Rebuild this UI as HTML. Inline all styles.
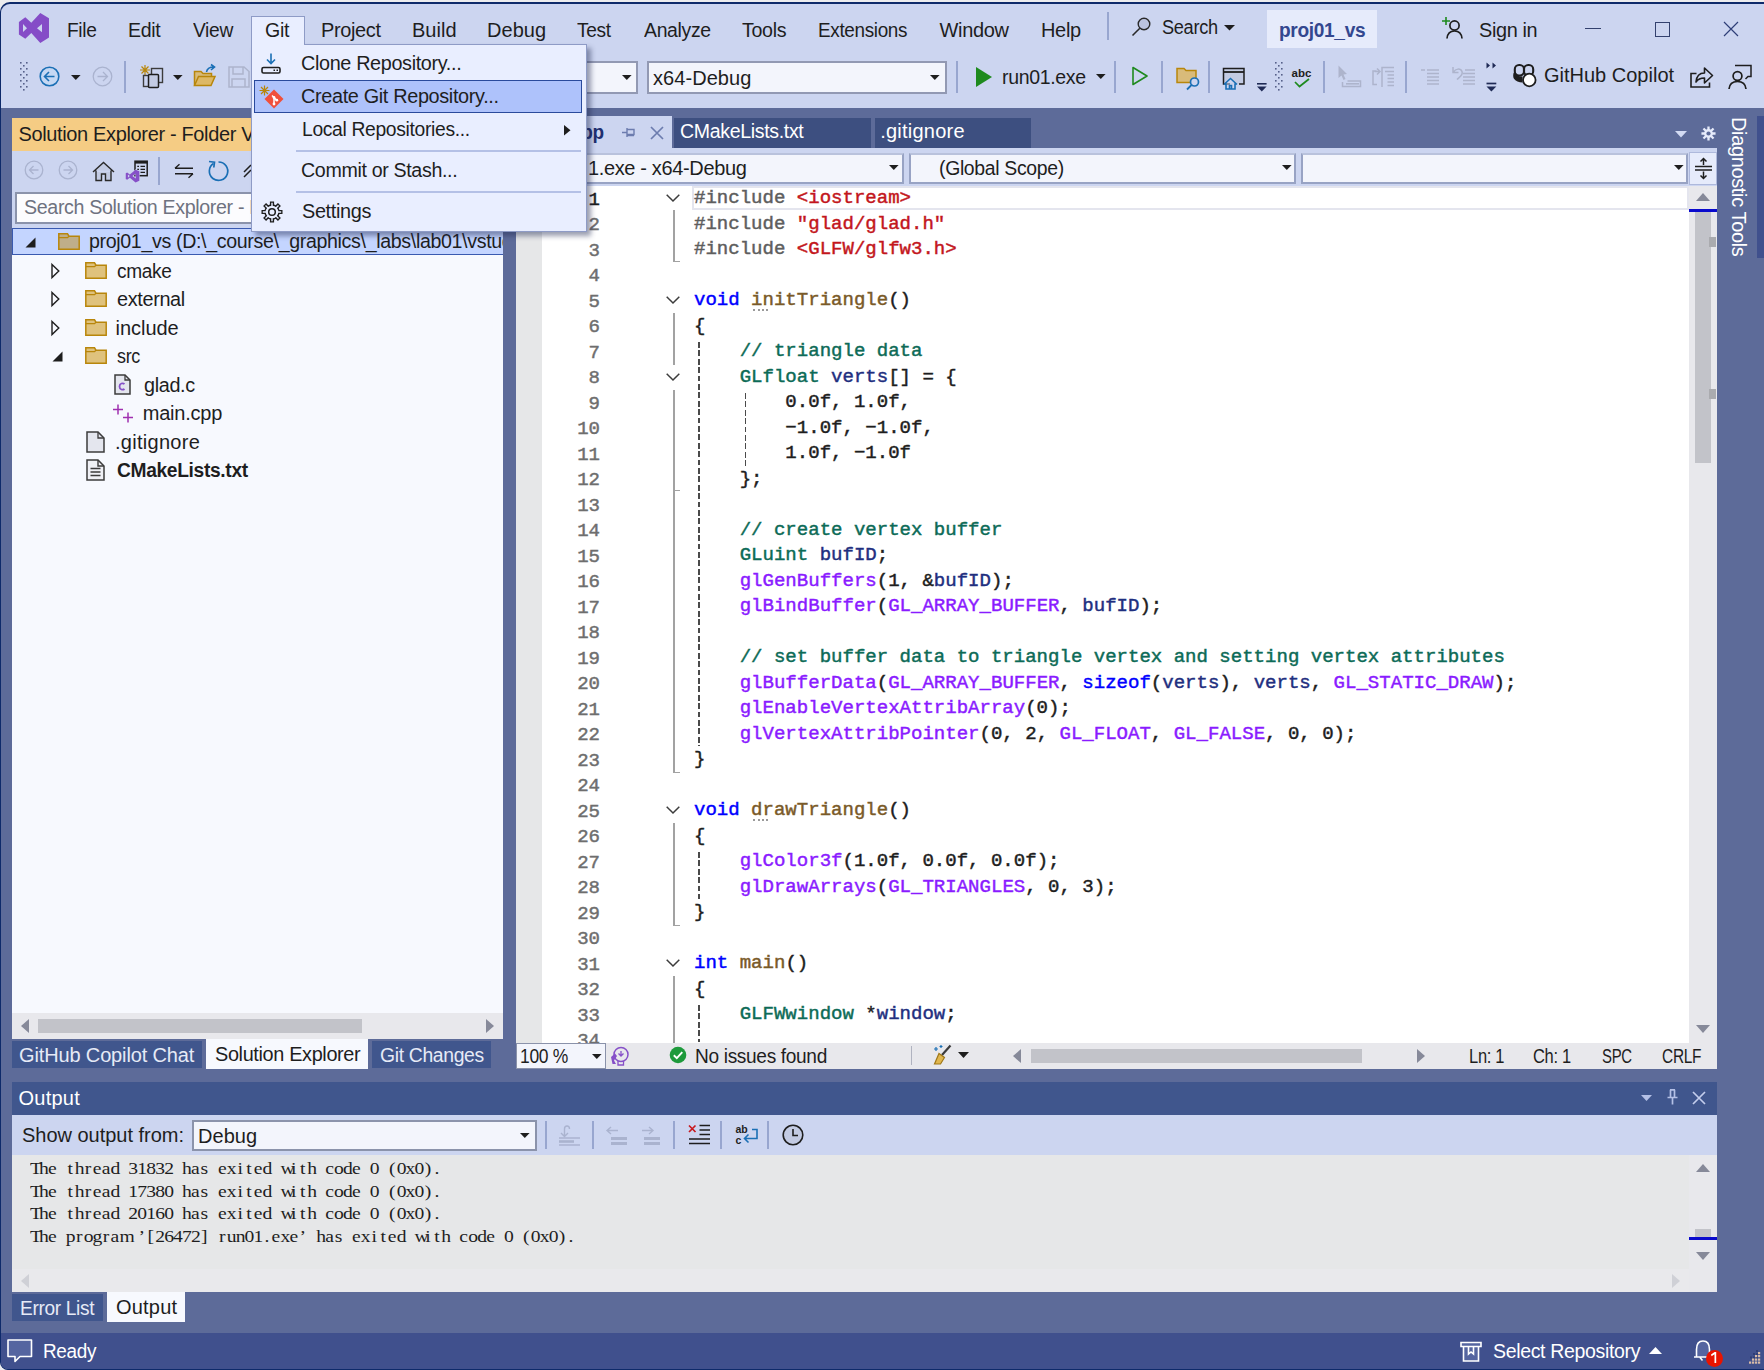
<!DOCTYPE html>
<html>
<head>
<meta charset="utf-8">
<title>proj01_vs - Microsoft Visual Studio</title>
<style>
*{box-sizing:border-box;margin:0;padding:0}
html,body{width:1764px;height:1370px;overflow:hidden;background:#ececee}
body{font-family:"Liberation Sans",sans-serif;font-size:20px;color:#1e1e1e;position:relative}
.a{position:absolute}
.t{position:absolute;white-space:nowrap;line-height:24px;height:24px;letter-spacing:-0.45px}
.w{color:#fff}
#win{position:absolute;left:0;top:2px;width:1775px;height:1368px;background:#5d6b99;border:1px solid #0e2a6a;border-top-width:2px;border-radius:10px 10px 8px 8px;overflow:hidden}
#root{position:absolute;left:0;top:0;width:1764px;height:1370px}
.sep{position:absolute;width:2px;background:#98a6cf}
svg{position:absolute;overflow:visible}
.code{position:absolute;white-space:pre;font-family:"Liberation Mono",monospace;font-size:19.05px;line-height:25.5px;letter-spacing:0;-webkit-text-stroke:0.45px}
.ln{color:#6a6a6a}
.k{color:#0000ff}.s{color:#c3161c}.c{color:#0d6b57}.ty{color:#0d6b57}.f{color:#7a5a28}.m{color:#8a1bff}.v{color:#1f2f7f}.p{color:#5e5e5e}
.os{white-space:nowrap;font-family:"Liberation Serif",serif;font-size:17.500px;line-height:22px;height:22px;color:#1e1e1e;transform-origin:0 0;transform:scaleX(1.120)}
.os i{display:inline-block;width:7.991px;text-align:center;font-style:normal}
</style>
</head>
<body>
<div id="win"></div>
<div id="root">
<!-- TITLE + TOOLBAR BACKGROUND -->
<div class="a" style="left:1px;top:4px;width:1773px;height:103.500px;background:#ccd5f0;border-radius:9px 9px 0 0"></div>
<!--MENUBAR-->
<svg style="left:17px;top:11px" width="34" height="34" viewBox="0 0 34 34"><path d="M1.900 11L8.300 6.300L14.300 11.800L23.300 1.900L32 7.300V26.500L23.300 32L14.300 22L8.300 27.700L1.900 23.400ZM6 13V21L10 17.300ZM25 13L20 17.300L25 21.300Z" fill="#854cc7" fill-rule="evenodd"/></svg>
<div class="t" style="left:66.7px;top:18px;transform-origin:0 0;transform:scaleX(0.958);letter-spacing:-0.35px">File</div>
<div class="t" style="left:127.9px;top:18px;transform-origin:0 0;transform:scaleX(0.977);letter-spacing:-0.35px">Edit</div>
<div class="t" style="left:193.1px;top:18px;transform-origin:0 0;transform:scaleX(0.960);letter-spacing:-0.35px">View</div>
<div class="a" style="left:251px;top:16px;width:54px;height:32px;background:#e9eeff;border:1px solid #8e9bc6;border-bottom:0"></div>
<div class="t" style="left:264.7px;top:18px;transform-origin:0 0;transform:scaleX(0.979);letter-spacing:-0.35px">Git</div>
<div class="t" style="left:320.6px;top:18px;transform-origin:0 0;transform:scaleX(0.998);letter-spacing:-0.35px">Project</div>
<div class="t" style="left:411.9px;top:18px;letter-spacing:0.04px">Build</div>
<div class="t" style="left:487.1px;top:18px;letter-spacing:0.02px">Debug</div>
<div class="t" style="left:577.4px;top:18px;transform-origin:0 0;transform:scaleX(0.956);letter-spacing:-0.35px">Test</div>
<div class="t" style="left:643.5px;top:18px;transform-origin:0 0;transform:scaleX(0.972);letter-spacing:-0.35px">Analyze</div>
<div class="t" style="left:742.0px;top:18px;transform-origin:0 0;transform:scaleX(0.983);letter-spacing:-0.35px">Tools</div>
<div class="t" style="left:817.6px;top:18px;transform-origin:0 0;transform:scaleX(0.945);letter-spacing:-0.35px">Extensions</div>
<div class="t" style="left:939.5px;top:18px;letter-spacing:-0.34px">Window</div>
<div class="t" style="left:1041.0px;top:18px;letter-spacing:-0.34px">Help</div>
<div class="sep" style="left:1107px;top:12px;height:28px"></div>
<svg style="left:1131px;top:16px" width="22" height="22" viewBox="0 0 22 22"><circle cx="13" cy="8" r="5.800" fill="#bcc4e0" stroke="#2a2a2a" stroke-width="1.400"/><path d="M8.800 12.200L1.500 19.500" stroke="#2a2a2a" stroke-width="1.600"/></svg>
<div class="t" style="left:1162.0px;top:15px;transform-origin:0 0;transform:scaleX(0.909);letter-spacing:-0.35px">Search</div>
<svg style="left:1224px;top:25px" width="12" height="6" viewBox="0 0 12 6"><path d="M0 0H11L5.5 5.5Z" fill="#1e1e1e"/></svg>
<div class="a" style="left:1267px;top:10px;width:110px;height:38px;background:#e6ebfb"></div>
<div class="t" style="left:1278.5px;top:18px;font-weight:bold;color:#33478f;transform-origin:0 0;transform:scaleX(0.956);letter-spacing:-0.35px">proj01_vs</div>
<svg style="left:1441px;top:16px" width="26" height="26" viewBox="0 0 26 26"><path d="M5 1V9M1 5H9" stroke="#1e8a1e" stroke-width="1.6" fill="none"/><circle cx="13.5" cy="9.5" r="4.6" fill="none" stroke="#1e1e1e" stroke-width="1.7"/><path d="M6 22.5C6.5 17 9.5 15 13.5 15S20.5 17 21 22.5" fill="none" stroke="#1e1e1e" stroke-width="1.7"/></svg>
<div class="t" style="left:1478.5px;top:18px;transform-origin:0 0;transform:scaleX(0.993);letter-spacing:-0.35px">Sign in</div>
<div class="a" style="left:1585px;top:28px;width:16px;height:1.200px;background:#33416e"></div>
<div class="a" style="left:1655px;top:22px;width:15px;height:15px;border:1.200px solid #33416e"></div>
<svg style="left:1723px;top:21px" width="16" height="16" viewBox="0 0 16 16"><path d="M1 1L15 15M15 1L1 15" stroke="#2f3f78" stroke-width="1.200"/></svg>
<!--TOOLBAR-->
<svg style="left:20px;top:62px" width="9" height="30" viewBox="0 0 9 30"><g fill="#56618a"><rect x="0" y="0.0" width="1.6" height="1.6"/><rect x="6" y="0.0" width="1.6" height="1.6"/><rect x="3" y="3.0" width="1.6" height="1.6"/><rect x="0" y="6.0" width="1.6" height="1.6"/><rect x="6" y="6.0" width="1.6" height="1.6"/><rect x="3" y="9.0" width="1.6" height="1.6"/><rect x="0" y="12.0" width="1.6" height="1.6"/><rect x="6" y="12.0" width="1.6" height="1.6"/><rect x="3" y="15.0" width="1.6" height="1.6"/><rect x="0" y="18.0" width="1.6" height="1.6"/><rect x="6" y="18.0" width="1.6" height="1.6"/><rect x="3" y="21.0" width="1.6" height="1.6"/><rect x="0" y="24.0" width="1.6" height="1.6"/><rect x="6" y="24.0" width="1.6" height="1.6"/><rect x="3" y="27.0" width="1.6" height="1.6"/></g></svg>
<svg style="left:39px;top:66px" width="21" height="21" viewBox="0 0 21 21"><circle cx="10.5" cy="10.5" r="9.3" fill="#c5d8f3" stroke="#1a6fb5" stroke-width="1.6"/><path d="M15.5 10.5H6M10 6L5.5 10.5L10 15" fill="none" stroke="#1a6fb5" stroke-width="1.6"/></svg>
<svg style="left:71px;top:75px" width="10" height="6" viewBox="0 0 10 6"><path d="M0 0H9.6L4.8 5Z" fill="#1e1e1e"/></svg>
<svg style="left:92px;top:66px" width="21" height="21" viewBox="0 0 21 21"><circle cx="10.5" cy="10.5" r="9.3" fill="none" stroke="#aab3cf" stroke-width="1.3"/><path d="M5.5 10.5H15M11 6L15.5 10.5L11 15" fill="none" stroke="#aab3cf" stroke-width="1.3"/></svg>
<div class="sep" style="left:124px;top:61px;height:32px"></div>
<svg style="left:139px;top:64px" width="27" height="26" viewBox="0 0 27 26"><g stroke="#b8860b" stroke-width="1.2"><path d="M6 1V11M1 6H11M2.5 2.5L9.5 9.5M9.5 2.5L2.5 9.5"/></g><rect x="12.5" y="4.5" width="11" height="14" fill="#ccd5f0" stroke="#3c3c3c" stroke-width="1.4"/><rect x="4.5" y="11.5" width="9" height="11" fill="#ccd5f0" stroke="#3c3c3c" stroke-width="1.4"/><rect x="9.5" y="10.5" width="10" height="13" rx="1" fill="#c3cbe3" stroke="#1e1e1e" stroke-width="1.5"/></svg>
<svg style="left:173px;top:75px" width="10" height="6" viewBox="0 0 10 6"><path d="M0 0H9.6L4.8 5Z" fill="#1e1e1e"/></svg>
<svg style="left:193px;top:64px" width="24" height="24" viewBox="0 0 24 24"><path d="M1.5 21.5V7.5H8L10 9.5H18.5V12" fill="#d9bb7a" stroke="#b8860b" stroke-width="1.5"/><path d="M1.5 21.5L5.5 12.5H22L18 21.5Z" fill="#ddb866" stroke="#b8860b" stroke-width="1.5"/><path d="M13.5 8C14 4.5 16.5 3 21 3M18 0.5L21.5 3L18 6" fill="none" stroke="#1a6fb5" stroke-width="1.6"/></svg>
<svg style="left:228px;top:66px" width="22" height="22" viewBox="0 0 22 22"><path d="M1 1H16L21 5.5V21H1Z M5 1V8H15V1 M4 21V13H17V21" fill="none" stroke="#adb4cc" stroke-width="1.500"/></svg>
<div class="a" style="left:560px;top:61px;width:78px;height:33px;background:#f3f5fc;border:2px solid #9299b3"></div>
<svg style="left:622px;top:75px" width="10" height="6" viewBox="0 0 10 6"><path d="M0 0H9.6L4.8 5Z" fill="#1e1e1e"/></svg>
<div class="a" style="left:647px;top:61px;width:300px;height:33px;background:#f3f5fc;border:2px solid #9299b3"></div>
<div class="t" style="left:653.0px;top:66px;letter-spacing:0.06px">x64-Debug</div>
<svg style="left:930px;top:75px" width="10" height="6" viewBox="0 0 10 6"><path d="M0 0H9.6L4.8 5Z" fill="#1e1e1e"/></svg>
<div class="sep" style="left:956px;top:61px;height:32px"></div>
<svg style="left:976px;top:67px" width="17" height="21" viewBox="0 0 17 21"><path d="M0 0L16 10L0 20Z" fill="#1e8a1e"/></svg>
<div class="t" style="left:1001.5px;top:65px;transform-origin:0 0;transform:scaleX(0.976);letter-spacing:-0.35px">run01.exe</div>
<svg style="left:1096px;top:74px" width="10" height="6" viewBox="0 0 10 6"><path d="M0 0H9.6L4.8 5Z" fill="#1e1e1e"/></svg>
<div class="sep" style="left:1114px;top:61px;height:32px"></div>
<svg style="left:1132px;top:66px" width="17" height="21" viewBox="0 0 17 21"><path d="M1 1.5L15 10L1 18.5Z" fill="none" stroke="#1e8a1e" stroke-width="1.6" stroke-linejoin="round"/></svg>
<div class="sep" style="left:1161px;top:61px;height:32px"></div>
<svg style="left:1176px;top:66px" width="25" height="24" viewBox="0 0 25 24"><path d="M1 16.5V2.5H8L10 4.5H20V16.5Z" fill="#d9bb7a" stroke="#b8860b" stroke-width="1.5"/><circle cx="18.5" cy="16" r="4" fill="#ccd5f0" stroke="#1a6fb5" stroke-width="1.7"/><path d="M15.5 19L11 23.5" stroke="#1a6fb5" stroke-width="1.8"/></svg>
<div class="sep" style="left:1208px;top:61px;height:32px"></div>
<svg style="left:1222px;top:67px" width="25" height="24" viewBox="0 0 25 24"><path d="M8 17H1.500V1.500H22V17H17" fill="#c3cbe3" stroke="#1e1e1e" stroke-width="1.5"/><path d="M1.5 5H22" stroke="#1e1e1e" stroke-width="1.8"/><path d="M2 17.500L8.500 11.500L15 17.500M4 16.500V22H13V16.500M7.500 22V18.500H9.500V22" fill="#ccd5f0" stroke="#1a6fb5" stroke-width="1.6"/></svg>
<svg style="left:1257px;top:83px" width="10" height="9" viewBox="0 0 10 9"><path d="M0 0.800H9.600" stroke="#1f2a55" stroke-width="1.600"/><path d="M0 3.500H9.600L4.800 8.500Z" fill="#1f2a55"/></svg>
<svg style="left:1275px;top:62px" width="9" height="30" viewBox="0 0 9 30"><g fill="#56618a"><rect x="0" y="0.0" width="1.6" height="1.6"/><rect x="6" y="0.0" width="1.6" height="1.6"/><rect x="3" y="3.0" width="1.6" height="1.6"/><rect x="0" y="6.0" width="1.6" height="1.6"/><rect x="6" y="6.0" width="1.6" height="1.6"/><rect x="3" y="9.0" width="1.6" height="1.6"/><rect x="0" y="12.0" width="1.6" height="1.6"/><rect x="6" y="12.0" width="1.6" height="1.6"/><rect x="3" y="15.0" width="1.6" height="1.6"/><rect x="0" y="18.0" width="1.6" height="1.6"/><rect x="6" y="18.0" width="1.6" height="1.6"/><rect x="3" y="21.0" width="1.6" height="1.6"/><rect x="0" y="24.0" width="1.6" height="1.6"/><rect x="6" y="24.0" width="1.6" height="1.6"/><rect x="3" y="27.0" width="1.6" height="1.6"/></g></svg>
<div class="t" style="left:1291.500px;top:66px;font-size:11.500px;font-weight:bold;letter-spacing:0;line-height:14px;height:14px">abc</div>
<svg style="left:1294px;top:78px" width="16" height="10" viewBox="0 0 16 10"><path d="M1 4L5.500 8.500L15 1" fill="none" stroke="#1e8a1e" stroke-width="1.700"/></svg>
<div class="sep" style="left:1323px;top:61px;height:32px"></div>
<svg style="left:1338px;top:65px" width="24" height="24" viewBox="0 0 24 24"><path d="M0.500 0.500L9 9L5.500 9.500L7.500 14L5.500 15L3.500 10.500L0.500 13Z" fill="#adb4cc"/><path d="M4.500 17V21.500H22.500V16H9.500" fill="none" stroke="#adb4cc" stroke-width="1.500"/><path d="M8 18.800H21" stroke="#adb4cc" stroke-width="1.600"/></svg>
<svg style="left:1371px;top:65px" width="24" height="24" viewBox="0 0 24 24"><path d="M5.500 6H2V19.500H6M3.500 6.500H8.500M6 3.500L9 6.500L6 9.500" fill="none" stroke="#adb4cc" stroke-width="1.500"/><path d="M11 22V2.500H23" fill="none" stroke="#adb4cc" stroke-width="1.500"/><path d="M14 6.500H23M16.500 10H23M16.500 13.500H23M16.500 17H23M16.500 20.500H23" stroke="#adb4cc" stroke-width="1.700"/></svg>
<div class="sep" style="left:1405px;top:61px;height:32px"></div>
<svg style="left:1420px;top:68px" width="20" height="20" viewBox="0 0 20 20"><path d="M1 2H5M7 2H19M7 5.500H19M7 9H19M7 12.500H19M7 16H19" stroke="#adb4cc" stroke-width="1.600"/></svg>
<svg style="left:1452px;top:66px" width="24" height="22" viewBox="0 0 24 22"><path d="M1 1V6.500H6.500M1.500 6C3.500 2.500 8.500 2 10 5.500S7.500 11 5 13.500" fill="none" stroke="#adb4cc" stroke-width="1.500"/><path d="M13 4H23M11 7.500H23M11 11H23M11 14.500H23M11 18H23" stroke="#adb4cc" stroke-width="1.600"/></svg>
<svg style="left:1486px;top:62px" width="11" height="31" viewBox="0 0 11 31"><path d="M0.500 0.500V6.500L4 3.500ZM6.500 0.500V6.500L10 3.500Z" fill="#1f2a55"/><path d="M0.500 21.500H10.300" stroke="#1f2a55" stroke-width="1.700"/><path d="M0.500 24.500H10.300L5.400 29.500Z" fill="#1f2a55"/></svg>
<svg style="left:1512px;top:63px" width="26" height="26" viewBox="0 0 26 26"><rect x="2.800" y="2" width="9.200" height="10.500" rx="4.200" fill="none" stroke="#1e1e1e" stroke-width="2.100"/><rect x="12" y="2" width="9.200" height="10.500" rx="4.200" fill="none" stroke="#1e1e1e" stroke-width="2.100"/><path d="M1.800 9.500C1 11 1 14 1.800 15.500C3.500 18 7 19.500 10.500 19.500V13.500C6 13.500 3.500 12 2.800 9.500Z" fill="#1e1e1e"/><circle cx="17.300" cy="17" r="6.300" fill="#fff" stroke="#1e1e1e" stroke-width="1.800"/></svg>
<div class="t" style="left:1544.0px;top:63px;letter-spacing:-0.00px">GitHub Copilot</div>
<svg style="left:1690px;top:66px" width="24" height="22" viewBox="0 0 24 22"><path d="M6.500 7.500H1V21H19.500V16.500" fill="none" stroke="#1e1e1e" stroke-width="1.600"/><path d="M6 16C6.500 10 10 7 14.500 7V2L22.500 9.500L14.500 17V12C11 12 8 13 6 16Z" fill="none" stroke="#1e1e1e" stroke-width="1.600" stroke-linejoin="round"/></svg>
<svg style="left:1727px;top:64px" width="26" height="26" viewBox="0 0 26 26"><path d="M8 1.500H24V12.500H21L18.500 15" fill="none" stroke="#1e1e1e" stroke-width="1.500"/><circle cx="10.500" cy="12" r="4.400" fill="#ccd5f0" stroke="#1e1e1e" stroke-width="1.700"/><path d="M2 25C2.500 19.500 6 17.500 10.500 17.500S18.500 19.500 19 25" fill="none" stroke="#1e1e1e" stroke-width="1.700"/></svg>
<!--SOLEXP-->
<div class="a" style="left:12px;top:118px;width:491px;height:33px;background:#f5cc84"></div>
<div class="t" style="left:18.4px;top:122px;transform-origin:0 0;transform:scaleX(1.000);letter-spacing:-0.35px">Solution Explorer - Folder View</div>
<div class="a" style="left:12px;top:151px;width:491px;height:77px;background:#ccd5f0"></div>
<svg style="left:24px;top:160px" width="20" height="20" viewBox="0 0 20 20"><circle cx="10" cy="10" r="8.800" fill="none" stroke="#aab3cf" stroke-width="1.300"/><path d="M14.500 10H5.500M9.500 6L5.500 10L9.500 14" fill="none" stroke="#aab3cf" stroke-width="1.300"/></svg>
<svg style="left:58px;top:160px" width="20" height="20" viewBox="0 0 20 20"><circle cx="10" cy="10" r="8.800" fill="none" stroke="#aab3cf" stroke-width="1.300"/><path d="M5.500 10H14.500M10.500 6L14.500 10L10.500 14" fill="none" stroke="#aab3cf" stroke-width="1.300"/></svg>
<svg style="left:92px;top:161px" width="23" height="21" viewBox="0 0 23 21"><path d="M1 11L11.500 1.500L22 11M4 9.500V19.500H9.500V13H13.500V19.500H19V9.500" fill="#c3cbe3" stroke="#2a2a2a" stroke-width="1.400"/></svg>
<svg style="left:125px;top:160px" width="24" height="23" viewBox="0 0 24 23"><rect x="10" y="1.200" width="12.200" height="14.500" fill="#ccd5f0" stroke="#1e1e1e" stroke-width="1.500"/><path d="M10 2.300H22.200" stroke="#1e1e1e" stroke-width="2.600"/><path d="M12.300 6.300H14M15.500 6.300H20M12.300 9.300H14M15.500 9.300H20M12.300 12.300H14M15.500 12.300H20" stroke="#1e1e1e" stroke-width="1.300"/><g transform="translate(0,9.300) scale(0.470,0.450)"><path d="M22.500 0.800 L30.500 4.600 V25.600 L22.500 29.600 L10.200 18.700 L4.600 23.200 L1.600 21.700 V8.500 L4.600 7 L10.200 11.600 Z M6.200 11.600 V18.700 L10.200 15.100 Z M23 9.600 L15.600 15.100 L23 20.700 Z" fill="#8650c8" stroke="#ccd5f0" stroke-width="1.500" paint-order="stroke" fill-rule="evenodd"/></g></svg>
<div class="sep" style="left:158px;top:157px;height:28px"></div>
<svg style="left:174px;top:164px" width="20" height="14" viewBox="0 0 20 14"><path d="M1 4.200H19M5.500 0.300L1 4.200M1 9.800H19M14.500 13.700L19 9.800" fill="none" stroke="#1e1e1e" stroke-width="1.400"/></svg>
<svg style="left:207px;top:159px" width="23" height="23" viewBox="0 0 23 23"><path d="M6.500 4.500A9.200 9.200 0 1 0 11.500 3" fill="none" stroke="#1a6fb5" stroke-width="1.700"/><path d="M2 2.500L7.500 3.200L6.800 8.500" fill="none" stroke="#1a6fb5" stroke-width="1.700"/></svg>
<svg style="left:243px;top:163px" width="12" height="16" viewBox="0 0 12 16"><path d="M1 9L8 2M1 14L8 7" stroke="#1e1e1e" stroke-width="1.500"/></svg>
<div class="a" style="left:15px;top:192px;width:486px;height:32px;background:#fcfcfe;border:2px solid #8b93ab"></div>
<div class="t" style="left:23.6px;top:195px;color:#6e7280;transform-origin:0 0;transform:scaleX(0.981);letter-spacing:-0.35px">Search Solution Explorer - Folder View</div>
<div class="a" style="left:12px;top:228px;width:491px;height:785px;background:#f7f9fe"></div>
<div class="a" style="left:12px;top:228px;width:491px;height:27px;background:#c4d5ff;border:1px solid #3a5ab0;border-right:0"></div>
<svg style="left:25px;top:237px" width="11" height="11" viewBox="0 0 11 11"><path d="M10.500 0.500V10.500H0.500Z" fill="#1e1e1e"/></svg><svg style="left:58px;top:233px" width="22" height="17" viewBox="0 0 22 17"><path d="M0.8 16.200V0.800H9.500L11 3.200H21.200V16.200Z" fill="#bfae8a" stroke="#b8860b" stroke-width="1.500"/><path d="M0.8 4.700H9.500L11 3.200" fill="none" stroke="#b8860b" stroke-width="1.300"/></svg>
<div class="a" style="left:12px;top:229px;width:491px;height:25px;overflow:hidden"><div class="t" style="left:77.0px;top:0px;transform-origin:0 0;transform:scaleX(0.980);letter-spacing:-0.35px">proj01_vs (D:\_course\_graphics\_labs\lab01\vstudio)</div></div>
<svg style="left:51px;top:263px" width="9" height="16" viewBox="0 0 9 16"><path d="M1 1.500L7.800 8L1 14.500Z" fill="none" stroke="#1e1e1e" stroke-width="1.400"/></svg><svg style="left:85px;top:262px" width="22" height="17" viewBox="0 0 22 17"><path d="M0.8 16.200V0.800H9.500L11 3.200H21.200V16.200Z" fill="#dfc27d" stroke="#b8860b" stroke-width="1.500"/><path d="M0.8 4.700H9.500L11 3.200" fill="none" stroke="#b8860b" stroke-width="1.300"/></svg>
<div class="t" style="left:116.5px;top:259px;transform-origin:0 0;transform:scaleX(0.955);letter-spacing:-0.35px">cmake</div>
<svg style="left:51px;top:291px" width="9" height="16" viewBox="0 0 9 16"><path d="M1 1.500L7.800 8L1 14.500Z" fill="none" stroke="#1e1e1e" stroke-width="1.400"/></svg><svg style="left:85px;top:290px" width="22" height="17" viewBox="0 0 22 17"><path d="M0.8 16.200V0.800H9.500L11 3.200H21.200V16.200Z" fill="#dfc27d" stroke="#b8860b" stroke-width="1.500"/><path d="M0.8 4.700H9.500L11 3.200" fill="none" stroke="#b8860b" stroke-width="1.300"/></svg>
<div class="t" style="left:116.5px;top:287px;transform-origin:0 0;transform:scaleX(0.993);letter-spacing:-0.35px">external</div>
<svg style="left:51px;top:320px" width="9" height="16" viewBox="0 0 9 16"><path d="M1 1.500L7.800 8L1 14.500Z" fill="none" stroke="#1e1e1e" stroke-width="1.400"/></svg><svg style="left:85px;top:319px" width="22" height="17" viewBox="0 0 22 17"><path d="M0.8 16.200V0.800H9.500L11 3.200H21.200V16.200Z" fill="#dfc27d" stroke="#b8860b" stroke-width="1.500"/><path d="M0.8 4.700H9.500L11 3.200" fill="none" stroke="#b8860b" stroke-width="1.300"/></svg>
<div class="t" style="left:115.5px;top:316px;letter-spacing:-0.03px">include</div>
<svg style="left:52px;top:351px" width="11" height="11" viewBox="0 0 11 11"><path d="M10.500 0.500V10.500H0.500Z" fill="#1e1e1e"/></svg><svg style="left:85px;top:347px" width="22" height="17" viewBox="0 0 22 17"><path d="M0.8 16.200V0.800H9.500L11 3.200H21.200V16.200Z" fill="#dfc27d" stroke="#b8860b" stroke-width="1.500"/><path d="M0.8 4.700H9.500L11 3.200" fill="none" stroke="#b8860b" stroke-width="1.300"/></svg>
<div class="t" style="left:116.5px;top:344px;transform-origin:0 0;transform:scaleX(0.898);letter-spacing:-0.35px">src</div>
<svg style="left:114px;top:374px" width="17" height="21" viewBox="0 0 17 21"><path d="M1 1H11L16 6V20H1Z" fill="#e4e6ee" stroke="#3c3c3c" stroke-width="1.500"/><path d="M11 1V6H16" fill="none" stroke="#3c3c3c" stroke-width="1.300"/><path d="M10.500 10C9 8.800 5.500 9 5.500 12.500S9 16.200 10.500 15" fill="none" stroke="#8650c8" stroke-width="1.800"/></svg>
<div class="t" style="left:143.7px;top:373px;transform-origin:0 0;transform:scaleX(0.990);letter-spacing:-0.35px">glad.c</div>
<svg style="left:112px;top:404px" width="23" height="20" viewBox="0 0 23 20"><path d="M6 0.500V10.500M1 5.500H11M16 8.500V18.500M11 13.500H21" stroke="#a030b0" stroke-width="1.500"/></svg>
<div class="t" style="left:142.7px;top:401px;letter-spacing:-0.22px">main.cpp</div>
<svg style="left:86px;top:431px" width="19" height="22" viewBox="0 0 19 22"><path d="M1 1H12L18 7V21H1Z" fill="#e4e6ee" stroke="#3c3c3c" stroke-width="1.500"/><path d="M12 1V7H18" fill="none" stroke="#3c3c3c" stroke-width="1.300"/></svg>
<div class="t" style="left:115.0px;top:430px;letter-spacing:0.28px">.gitignore</div>
<svg style="left:86px;top:459px" width="19" height="22" viewBox="0 0 19 22"><path d="M1 1H12L18 7V21H1Z" fill="#f0f1f6" stroke="#3c3c3c" stroke-width="1.500"/><path d="M12 1V7H18M4.500 9.500H14.500M4.500 13H14.500M4.500 16.500H14.500" fill="none" stroke="#3c3c3c" stroke-width="1.400"/></svg>
<div class="t" style="left:116.5px;top:458px;font-weight:bold;transform-origin:0 0;transform:scaleX(0.960);letter-spacing:-0.35px">CMakeLists.txt</div>
<div class="a" style="left:12px;top:1013px;width:491px;height:26px;background:#e8e8ec"></div>
<div class="a" style="left:38px;top:1019px;width:324px;height:14px;background:#c2c3c9"></div>
<svg style="left:21px;top:1019px" width="8" height="14" viewBox="0 0 8 14"><path d="M8 0V14L0 7Z" fill="#868999"/></svg>
<svg style="left:486px;top:1019px" width="8" height="14" viewBox="0 0 8 14"><path d="M0 0V14L8 7Z" fill="#868999"/></svg>
<div class="a" style="left:12px;top:1041px;width:190px;height:27px;background:#40568d"></div>
<div class="t w" style="left:19.0px;top:1043px;color:#e6eaf6;letter-spacing:-0.14px">GitHub Copilot Chat</div>
<div class="a" style="left:206px;top:1039px;width:162px;height:30px;background:#f7f9fe"></div>
<div class="t" style="left:214.5px;top:1042px;transform-origin:0 0;transform:scaleX(0.993);letter-spacing:-0.35px">Solution Explorer</div>
<div class="a" style="left:372px;top:1041px;width:119px;height:27px;background:#40568d"></div>
<div class="t w" style="left:379.5px;top:1043px;color:#e6eaf6;transform-origin:0 0;transform:scaleX(0.968);letter-spacing:-0.35px">Git Changes</div>
<!--EDITOR-->
<div class="a" style="left:516px;top:116px;width:156px;height:33px;background:#ccd5f0"></div>
<div class="t" style="left:523.1px;top:120px;font-weight:bold;color:#1f2f6f;transform-origin:0 0;transform:scaleX(0.949);letter-spacing:-0.35px">main.cpp</div>
<svg style="left:622px;top:126px" width="13" height="13" viewBox="0 0 13 13"><path d="M0 6.500H5M5 2V11M5 3.500H12V8.500H5M5 9.500H12" fill="none" stroke="#6c7cae" stroke-width="1.400"/></svg>
<svg style="left:650px;top:126px" width="14" height="14" viewBox="0 0 14 14"><path d="M1 1L13 13M13 1L1 13" stroke="#6c7cae" stroke-width="1.700"/></svg>
<div class="a" style="left:674px;top:118px;width:197px;height:31px;background:#3d4f80"></div>
<div class="t w" style="left:679.5px;top:119px;transform-origin:0 0;transform:scaleX(0.978);letter-spacing:-0.35px">CMakeLists.txt</div>
<div class="a" style="left:875px;top:118px;width:156px;height:31px;background:#3d4f80"></div>
<div class="t w" style="left:880.2px;top:119px;letter-spacing:0.24px">.gitignore</div>
<svg style="left:1675px;top:131px" width="12" height="7" viewBox="0 0 12 7"><path d="M0 0H12L6 6.500Z" fill="#d3dbf3"/></svg>
<svg style="left:1701px;top:126px" width="15" height="15" viewBox="0 0 17 17"><g stroke="#e6ebfb" stroke-width="2.600"><path d="M8.500 0.500V16.500M0.500 8.500H16.500M2.800 2.800L14.200 14.200M14.200 2.800L2.800 14.200"/></g><circle cx="8.500" cy="8.500" r="5" fill="#e6ebfb"/><circle cx="8.500" cy="8.500" r="2.400" fill="#5d6b99"/></svg>
<div class="a" style="left:516px;top:148px;width:1201px;height:38px;background:#ccd5f0"></div>
<div class="a" style="left:516px;top:153px;width:388px;height:31px;background:#f3f5fc;border:2px solid #98a3c4;border-top-color:#b9c2dc;border-left:0"></div>
<div class="t" style="left:588.3px;top:156px;transform-origin:0 0;transform:scaleX(0.999);letter-spacing:-0.35px">1.exe - x64-Debug</div>
<svg style="left:889px;top:165px" width="10" height="6" viewBox="0 0 10 6"><path d="M0 0H9.600L4.800 5Z" fill="#1e1e1e"/></svg>
<div class="a" style="left:909px;top:153px;width:387px;height:31px;background:#f3f5fc;border:2px solid #98a3c4;border-top-color:#b9c2dc"></div>
<div class="t" style="left:938.5px;top:156px;transform-origin:0 0;transform:scaleX(0.971);letter-spacing:-0.35px">(Global Scope)</div>
<svg style="left:1282px;top:165px" width="10" height="6" viewBox="0 0 10 6"><path d="M0 0H9.600L4.800 5Z" fill="#1e1e1e"/></svg>
<div class="a" style="left:1301px;top:153px;width:387px;height:31px;background:#f3f5fc;border:2px solid #98a3c4;border-top-color:#b9c2dc"></div>
<svg style="left:1674px;top:165px" width="10" height="6" viewBox="0 0 10 6"><path d="M0 0H9.600L4.800 5Z" fill="#1e1e1e"/></svg>
<div class="a" style="left:1689px;top:152px;width:28px;height:33px;background:#e6ebfb;border:1px solid #aeb9dc"></div>
<svg style="left:1695px;top:158px" width="17" height="21" viewBox="0 0 17 21"><path d="M0 8.500H17M0 12H17M8.500 0.500V7M8.500 13.500V20.500M5.500 3.500L8.500 0.500L11.500 3.500M5.500 17.500L8.500 20.500L11.500 17.500" fill="none" stroke="#1e1e1e" stroke-width="1.500"/></svg>
<div class="a" style="left:516px;top:186px;width:1173px;height:857px;background:#fff;overflow:hidden">
<div class="a" style="left:0;top:0;width:26px;height:857px;background:#e6e7e8"></div>
<div class="a" style="left:176px;top:0;width:997px;height:24px;border:2px solid #e4e5ee"></div>
<div class="a" style="left:157px;top:24px;width:1.600px;height:52px;background:#a2a2a2"></div>
<div class="a" style="left:157px;top:75px;width:7px;height:1.400px;background:#a2a2a2"></div>
<div class="a" style="left:157px;top:127px;width:1.600px;height:52px;background:#a2a2a2"></div>
<div class="a" style="left:157px;top:204px;width:1.600px;height:383px;background:#a2a2a2"></div>
<div class="a" style="left:157px;top:304px;width:7px;height:1.400px;background:#a2a2a2"></div>
<div class="a" style="left:157px;top:586px;width:7px;height:1.400px;background:#a2a2a2"></div>
<div class="a" style="left:157px;top:637px;width:1.600px;height:103px;background:#a2a2a2"></div>
<div class="a" style="left:157px;top:739px;width:7px;height:1.400px;background:#a2a2a2"></div>
<div class="a" style="left:157px;top:790px;width:1.600px;height:67px;background:#a2a2a2"></div>
<div class="a" style="left:182px;top:156px;width:1.500px;height:404px;background:repeating-linear-gradient(to bottom,#4a4a4a 0,#4a4a4a 5.800px,transparent 5.800px,transparent 8.400px)"></div>
<div class="a" style="left:228.5px;top:207px;width:1.500px;height:73px;background:repeating-linear-gradient(to bottom,#4a4a4a 0,#4a4a4a 5.800px,transparent 5.800px,transparent 8.400px)"></div>
<div class="a" style="left:182px;top:666px;width:1.500px;height:47px;background:repeating-linear-gradient(to bottom,#4a4a4a 0,#4a4a4a 5.800px,transparent 5.800px,transparent 8.400px)"></div>
<div class="a" style="left:182px;top:819px;width:1.500px;height:37px;background:repeating-linear-gradient(to bottom,#4a4a4a 0,#4a4a4a 5.800px,transparent 5.800px,transparent 8.400px)"></div>
<svg style="left:150px;top:8.300000000000011px" width="14" height="8" viewBox="0 0 14 8"><path d="M0.700 0.700L7 7L13.300 0.700" fill="none" stroke="#3c3c3c" stroke-width="1.500"/></svg>
<svg style="left:150px;top:110.30000000000001px" width="14" height="8" viewBox="0 0 14 8"><path d="M0.700 0.700L7 7L13.300 0.700" fill="none" stroke="#3c3c3c" stroke-width="1.500"/></svg>
<svg style="left:150px;top:186.8px" width="14" height="8" viewBox="0 0 14 8"><path d="M0.700 0.700L7 7L13.300 0.700" fill="none" stroke="#3c3c3c" stroke-width="1.500"/></svg>
<svg style="left:150px;top:620.3px" width="14" height="8" viewBox="0 0 14 8"><path d="M0.700 0.700L7 7L13.300 0.700" fill="none" stroke="#3c3c3c" stroke-width="1.500"/></svg>
<svg style="left:150px;top:773.3px" width="14" height="8" viewBox="0 0 14 8"><path d="M0.700 0.700L7 7L13.300 0.700" fill="none" stroke="#3c3c3c" stroke-width="1.500"/></svg>
<div class="a" style="left:237px;top:123px;width:15px;height:0;border-top:2px dotted #9a9a9a"></div>
<div class="a" style="left:237px;top:633px;width:15px;height:0;border-top:2px dotted #9a9a9a"></div>
<div class="code" style="left:24px;width:60px;text-align:right;top:1.8px;color:#1e1e1e">1</div><div class="code" style="left:178px;top:0.0px"><span class="p">#include </span><span class="s">&lt;iostream&gt;</span></div>
<div class="code" style="left:24px;width:60px;text-align:right;top:27.3px;color:#6e6e6e">2</div><div class="code" style="left:178px;top:25.5px"><span class="p">#include </span><span class="s">&quot;glad/glad.h&quot;</span></div>
<div class="code" style="left:24px;width:60px;text-align:right;top:52.8px;color:#6e6e6e">3</div><div class="code" style="left:178px;top:51.0px"><span class="p">#include </span><span class="s">&lt;GLFW/glfw3.h&gt;</span></div>
<div class="code" style="left:24px;width:60px;text-align:right;top:78.3px;color:#6e6e6e">4</div>
<div class="code" style="left:24px;width:60px;text-align:right;top:103.8px;color:#6e6e6e">5</div><div class="code" style="left:178px;top:102.0px"><span class="k">void</span> <span class="f">initTriangle</span>()</div>
<div class="code" style="left:24px;width:60px;text-align:right;top:129.3px;color:#6e6e6e">6</div><div class="code" style="left:178px;top:127.5px">{</div>
<div class="code" style="left:24px;width:60px;text-align:right;top:154.8px;color:#6e6e6e">7</div><div class="code" style="left:178px;top:153.0px">    <span class="c">// triangle data</span></div>
<div class="code" style="left:24px;width:60px;text-align:right;top:180.3px;color:#6e6e6e">8</div><div class="code" style="left:178px;top:178.5px">    <span class="ty">GLfloat</span> <span class="v">verts</span>[] = {</div>
<div class="code" style="left:24px;width:60px;text-align:right;top:205.8px;color:#6e6e6e">9</div><div class="code" style="left:178px;top:204.0px">        0.0f, 1.0f,</div>
<div class="code" style="left:24px;width:60px;text-align:right;top:231.3px;color:#6e6e6e">10</div><div class="code" style="left:178px;top:229.5px">        −1.0f, −1.0f,</div>
<div class="code" style="left:24px;width:60px;text-align:right;top:256.8px;color:#6e6e6e">11</div><div class="code" style="left:178px;top:255.0px">        1.0f, −1.0f</div>
<div class="code" style="left:24px;width:60px;text-align:right;top:282.3px;color:#6e6e6e">12</div><div class="code" style="left:178px;top:280.5px">    };</div>
<div class="code" style="left:24px;width:60px;text-align:right;top:307.8px;color:#6e6e6e">13</div>
<div class="code" style="left:24px;width:60px;text-align:right;top:333.3px;color:#6e6e6e">14</div><div class="code" style="left:178px;top:331.5px">    <span class="c">// create vertex buffer</span></div>
<div class="code" style="left:24px;width:60px;text-align:right;top:358.8px;color:#6e6e6e">15</div><div class="code" style="left:178px;top:357.0px">    <span class="ty">GLuint</span> <span class="v">bufID</span>;</div>
<div class="code" style="left:24px;width:60px;text-align:right;top:384.3px;color:#6e6e6e">16</div><div class="code" style="left:178px;top:382.5px">    <span class="m">glGenBuffers</span>(1, &amp;<span class="v">bufID</span>);</div>
<div class="code" style="left:24px;width:60px;text-align:right;top:409.8px;color:#6e6e6e">17</div><div class="code" style="left:178px;top:408.0px">    <span class="m">glBindBuffer</span>(<span class="m">GL_ARRAY_BUFFER</span>, <span class="v">bufID</span>);</div>
<div class="code" style="left:24px;width:60px;text-align:right;top:435.3px;color:#6e6e6e">18</div>
<div class="code" style="left:24px;width:60px;text-align:right;top:460.8px;color:#6e6e6e">19</div><div class="code" style="left:178px;top:459.0px">    <span class="c">// set buffer data to triangle vertex and setting vertex attributes</span></div>
<div class="code" style="left:24px;width:60px;text-align:right;top:486.3px;color:#6e6e6e">20</div><div class="code" style="left:178px;top:484.5px">    <span class="m">glBufferData</span>(<span class="m">GL_ARRAY_BUFFER</span>, <span class="k">sizeof</span>(<span class="v">verts</span>), <span class="v">verts</span>, <span class="m">GL_STATIC_DRAW</span>);</div>
<div class="code" style="left:24px;width:60px;text-align:right;top:511.8px;color:#6e6e6e">21</div><div class="code" style="left:178px;top:510.0px">    <span class="m">glEnableVertexAttribArray</span>(0);</div>
<div class="code" style="left:24px;width:60px;text-align:right;top:537.3px;color:#6e6e6e">22</div><div class="code" style="left:178px;top:535.5px">    <span class="m">glVertexAttribPointer</span>(0, 2, <span class="m">GL_FLOAT</span>, <span class="m">GL_FALSE</span>, 0, 0);</div>
<div class="code" style="left:24px;width:60px;text-align:right;top:562.8px;color:#6e6e6e">23</div><div class="code" style="left:178px;top:561.0px">}</div>
<div class="code" style="left:24px;width:60px;text-align:right;top:588.3px;color:#6e6e6e">24</div>
<div class="code" style="left:24px;width:60px;text-align:right;top:613.8px;color:#6e6e6e">25</div><div class="code" style="left:178px;top:612.0px"><span class="k">void</span> <span class="f">drawTriangle</span>()</div>
<div class="code" style="left:24px;width:60px;text-align:right;top:639.3px;color:#6e6e6e">26</div><div class="code" style="left:178px;top:637.5px">{</div>
<div class="code" style="left:24px;width:60px;text-align:right;top:664.8px;color:#6e6e6e">27</div><div class="code" style="left:178px;top:663.0px">    <span class="m">glColor3f</span>(1.0f, 0.0f, 0.0f);</div>
<div class="code" style="left:24px;width:60px;text-align:right;top:690.3px;color:#6e6e6e">28</div><div class="code" style="left:178px;top:688.5px">    <span class="m">glDrawArrays</span>(<span class="m">GL_TRIANGLES</span>, 0, 3);</div>
<div class="code" style="left:24px;width:60px;text-align:right;top:715.8px;color:#6e6e6e">29</div><div class="code" style="left:178px;top:714.0px">}</div>
<div class="code" style="left:24px;width:60px;text-align:right;top:741.3px;color:#6e6e6e">30</div>
<div class="code" style="left:24px;width:60px;text-align:right;top:766.8px;color:#6e6e6e">31</div><div class="code" style="left:178px;top:765.0px"><span class="k">int</span> <span class="f">main</span>()</div>
<div class="code" style="left:24px;width:60px;text-align:right;top:792.3px;color:#6e6e6e">32</div><div class="code" style="left:178px;top:790.5px">{</div>
<div class="code" style="left:24px;width:60px;text-align:right;top:817.8px;color:#6e6e6e">33</div><div class="code" style="left:178px;top:816.0px">    <span class="ty">GLFWwindow</span> *<span class="v">window</span>;</div>
<div class="code" style="left:24px;width:60px;text-align:right;top:843.3px;color:#6e6e6e">34</div>
</div>
<div class="a" style="left:1689px;top:186px;width:28px;height:857px;background:#e8e8ec"></div>
<svg style="left:1696px;top:193px" width="14" height="8" viewBox="0 0 14 8"><path d="M0 8H14L7 0Z" fill="#868999"/></svg>
<div class="a" style="left:1689px;top:209px;width:28px;height:3px;background:#0a0acd"></div>
<div class="a" style="left:1695px;top:212px;width:16px;height:251px;background:#c2c3c9"></div>
<div class="a" style="left:1708.500px;top:237px;width:7.500px;height:9.500px;background:#aaabaf"></div>
<div class="a" style="left:1708.500px;top:389px;width:7.500px;height:9.500px;background:#aaabaf"></div>
<svg style="left:1696px;top:1025px" width="14" height="8" viewBox="0 0 14 8"><path d="M0 0H14L7 8Z" fill="#868999"/></svg>
<div class="a" style="left:516px;top:1043px;width:1201px;height:26px;background:#e8e8ec"></div>
<div class="a" style="left:516px;top:1043px;width:90px;height:26px;background:#f3f5fc;border:1.500px solid #8a92aa"></div>
<div class="t" style="left:519.5px;top:1044px;transform-origin:0 0;transform:scaleX(0.873);letter-spacing:-0.35px">100 %</div>
<svg style="left:592px;top:1054px" width="10" height="6" viewBox="0 0 10 6"><path d="M0 0H9.600L4.800 5Z" fill="#1e1e1e"/></svg>
<svg style="left:610px;top:1046px" width="19" height="20" viewBox="0 0 19 20"><circle cx="11" cy="8.500" r="7" fill="none" stroke="#8650c8" stroke-width="1.500"/><path d="M11 5V10M8.500 7.500L11 10L13.500 7.500M8 15V19H13.500V15" fill="none" stroke="#8650c8" stroke-width="1.300"/><path d="M1 11L5 7.500L7 10L4 14.500L6 18H2.500Z" fill="#8650c8"/></svg>
<svg style="left:669px;top:1046px" width="18" height="18" viewBox="0 0 18 18"><circle cx="9" cy="9" r="8.300" fill="#1e9a3c"/><path d="M4.800 9.300L7.800 12.200L13.300 6.200" fill="none" stroke="#fff" stroke-width="1.900"/></svg>
<div class="t" style="left:694.6px;top:1044px;transform-origin:0 0;transform:scaleX(0.955);letter-spacing:-0.35px">No issues found</div>
<div class="a" style="left:911px;top:1046px;width:1px;height:19px;background:#b0b3c0"></div>
<svg style="left:932px;top:1044px" width="20" height="21" viewBox="0 0 20 21"><path d="M18.500 1.500L10 11" stroke="#3c3c3c" stroke-width="2.200"/><path d="M7 9.500L12.500 13.500L8.500 20H2.500Z" fill="#e0b64e" stroke="#a07818" stroke-width="1.200"/><path d="M4 3V7M2 5H6M9 1V4M7.500 2.500H10.500" stroke="#1a6fb5" stroke-width="1.200"/></svg>
<svg style="left:958px;top:1052px" width="11" height="7" viewBox="0 0 11 7"><path d="M0 0H11L5.500 6Z" fill="#1e1e1e"/></svg>
<svg style="left:1013px;top:1049px" width="8" height="14" viewBox="0 0 8 14"><path d="M8 0V14L0 7Z" fill="#868999"/></svg>
<div class="a" style="left:1031px;top:1049px;width:331px;height:14px;background:#c2c3c9"></div>
<svg style="left:1417px;top:1049px" width="8" height="14" viewBox="0 0 8 14"><path d="M0 0V14L8 7Z" fill="#868999"/></svg>
<div class="t" style="left:1468.5px;top:1044px;transform-origin:0 0;transform:scaleX(0.825);letter-spacing:-0.35px">Ln: 1</div>
<div class="t" style="left:1532.8px;top:1044px;transform-origin:0 0;transform:scaleX(0.824);letter-spacing:-0.35px">Ch: 1</div>
<div class="t" style="left:1601.5px;top:1044px;transform-origin:0 0;transform:scaleX(0.745);letter-spacing:-0.35px">SPC</div>
<div class="t" style="left:1661.6px;top:1044px;transform-origin:0 0;transform:scaleX(0.773);letter-spacing:-0.35px">CRLF</div>
<div class="a" style="left:1757px;top:116px;width:7px;height:142px;background:#40508d"></div>
<div class="t w" style="left:1727px;top:117px;transform-origin:0 0;transform:rotate(90deg) translate(0,-24px);letter-spacing:-0.36px">Diagnostic Tools</div>
<!--OUTPUT-->
<div class="a" style="left:12px;top:1082px;width:1705px;height:33px;background:#40568d"></div>
<div class="t w" style="left:18.6px;top:1086px;letter-spacing:0.22px">Output</div>
<svg style="left:1641px;top:1095px" width="11" height="6" viewBox="0 0 11 6"><path d="M0 0H11L5.500 6Z" fill="#b4c0e6"/></svg>
<svg style="left:1667px;top:1089px" width="11" height="16" viewBox="0 0 11 16"><path d="M3 0.800H8M3.500 0.800V8.500M7.500 0.800V8.500M0.500 8.500H10.500M5.500 8.500V15.500" fill="none" stroke="#b4c0e6" stroke-width="1.700"/></svg>
<svg style="left:1692px;top:1091px" width="14" height="14" viewBox="0 0 14 14"><path d="M1 1L13 13M13 1L1 13" stroke="#c3cdec" stroke-width="1.700"/></svg>
<div class="a" style="left:12px;top:1115px;width:1705px;height:40px;background:#ccd5f0"></div>
<div class="t" style="left:22.0px;top:1123px;letter-spacing:-0.02px">Show output from:</div>
<div class="a" style="left:192px;top:1120px;width:345px;height:31px;background:#f3f5fc;border:2px solid #8b93ab"></div>
<div class="t" style="left:198.0px;top:1124px;letter-spacing:0.05px">Debug</div>
<svg style="left:520px;top:1133px" width="10" height="6" viewBox="0 0 10 6"><path d="M0 0H9.600L4.800 5Z" fill="#1e1e1e"/></svg>
<div class="sep" style="left:545px;top:1121px;height:28px"></div>
<svg style="left:559px;top:1124px" width="23" height="22" viewBox="0 0 23 22"><path d="M0 14H21M0 21H21" stroke="#aab3cf" stroke-width="1.300"/><path d="M0 17.500H15" stroke="#aab3cf" stroke-width="2.600"/><path d="M5.500 12V5C5.500 1 10.500 1 10.500 5M2 9L5.500 12.500L9 9" fill="none" stroke="#aab3cf" stroke-width="1.400"/></svg>
<div class="sep" style="left:592px;top:1121px;height:28px"></div>
<svg style="left:606px;top:1126px" width="22" height="20" viewBox="0 0 22 20"><path d="M1 4.500H12M5 1L1 4.500L5 8" fill="none" stroke="#aab3cf" stroke-width="1.400"/><path d="M5 12.500H21M5 17.500H21" stroke="#aab3cf" stroke-width="3"/></svg>
<svg style="left:640px;top:1126px" width="22" height="20" viewBox="0 0 22 20"><path d="M2 4.500H13M9 1L13 4.500L9 8" fill="none" stroke="#aab3cf" stroke-width="1.400"/><path d="M4 12.500H20M4 17.500H20" stroke="#aab3cf" stroke-width="3"/></svg>
<div class="sep" style="left:673px;top:1121px;height:28px"></div>
<svg style="left:688px;top:1124px" width="23" height="22" viewBox="0 0 23 22"><path d="M1 1.500L7.500 8M7.500 1.500L1 8" stroke="#c8191f" stroke-width="1.700"/><path d="M11.500 1.500H22M11.500 6H22M11.500 10.500H22M1 15H22M1 19.500H22" stroke="#1e1e1e" stroke-width="1.500"/></svg>
<div class="sep" style="left:720px;top:1121px;height:28px"></div>
<div class="t" style="left:735.500px;top:1122px;font-size:10.500px;font-weight:bold;letter-spacing:0;line-height:14px;height:14px">ab</div>
<div class="t" style="left:735.500px;top:1132.500px;font-size:10.500px;font-weight:bold;letter-spacing:0;line-height:14px;height:14px">c</div>
<svg style="left:742px;top:1128px" width="16" height="16" viewBox="0 0 16 16"><path d="M10 1.500H15V10.500H3M6.500 6.500L2.500 10.500L6.500 14.500" fill="none" stroke="#1a6fb5" stroke-width="1.600"/></svg>
<div class="sep" style="left:767px;top:1121px;height:28px"></div>
<svg style="left:782px;top:1124px" width="22" height="22" viewBox="0 0 22 22"><circle cx="11" cy="11" r="9.800" fill="#c3cbe3" stroke="#1e1e1e" stroke-width="1.600"/><path d="M11 5V11.500H16" fill="none" stroke="#1e1e1e" stroke-width="1.600"/></svg>
<div class="a" style="left:12px;top:1155px;width:1705px;height:137px;background:#e6e7e8"></div>
<div class="a" style="left:12px;top:1269px;width:1677px;height:23px;background:#e9e9ec"></div>
<div class="a os" style="left:30px;top:1157px"><i>T</i><i>h</i><i>e</i><i>&nbsp;</i><i>t</i><i>h</i><i>r</i><i>e</i><i>a</i><i>d</i><i>&nbsp;</i><i>3</i><i>1</i><i>8</i><i>3</i><i>2</i><i>&nbsp;</i><i>h</i><i>a</i><i>s</i><i>&nbsp;</i><i>e</i><i>x</i><i>i</i><i>t</i><i>e</i><i>d</i><i>&nbsp;</i><i>w</i><i>i</i><i>t</i><i>h</i><i>&nbsp;</i><i>c</i><i>o</i><i>d</i><i>e</i><i>&nbsp;</i><i>0</i><i>&nbsp;</i><i>(</i><i>0</i><i>x</i><i>0</i><i>)</i><i>.</i></div>
<div class="a os" style="left:30px;top:1180px"><i>T</i><i>h</i><i>e</i><i>&nbsp;</i><i>t</i><i>h</i><i>r</i><i>e</i><i>a</i><i>d</i><i>&nbsp;</i><i>1</i><i>7</i><i>3</i><i>8</i><i>0</i><i>&nbsp;</i><i>h</i><i>a</i><i>s</i><i>&nbsp;</i><i>e</i><i>x</i><i>i</i><i>t</i><i>e</i><i>d</i><i>&nbsp;</i><i>w</i><i>i</i><i>t</i><i>h</i><i>&nbsp;</i><i>c</i><i>o</i><i>d</i><i>e</i><i>&nbsp;</i><i>0</i><i>&nbsp;</i><i>(</i><i>0</i><i>x</i><i>0</i><i>)</i><i>.</i></div>
<div class="a os" style="left:30px;top:1202px"><i>T</i><i>h</i><i>e</i><i>&nbsp;</i><i>t</i><i>h</i><i>r</i><i>e</i><i>a</i><i>d</i><i>&nbsp;</i><i>2</i><i>0</i><i>1</i><i>6</i><i>0</i><i>&nbsp;</i><i>h</i><i>a</i><i>s</i><i>&nbsp;</i><i>e</i><i>x</i><i>i</i><i>t</i><i>e</i><i>d</i><i>&nbsp;</i><i>w</i><i>i</i><i>t</i><i>h</i><i>&nbsp;</i><i>c</i><i>o</i><i>d</i><i>e</i><i>&nbsp;</i><i>0</i><i>&nbsp;</i><i>(</i><i>0</i><i>x</i><i>0</i><i>)</i><i>.</i></div>
<div class="a os" style="left:30px;top:1225px"><i>T</i><i>h</i><i>e</i><i>&nbsp;</i><i>p</i><i>r</i><i>o</i><i>g</i><i>r</i><i>a</i><i>m</i><i>&nbsp;</i><i>’</i><i>[</i><i>2</i><i>6</i><i>4</i><i>7</i><i>2</i><i>]</i><i>&nbsp;</i><i>r</i><i>u</i><i>n</i><i>0</i><i>1</i><i>.</i><i>e</i><i>x</i><i>e</i><i>’</i><i>&nbsp;</i><i>h</i><i>a</i><i>s</i><i>&nbsp;</i><i>e</i><i>x</i><i>i</i><i>t</i><i>e</i><i>d</i><i>&nbsp;</i><i>w</i><i>i</i><i>t</i><i>h</i><i>&nbsp;</i><i>c</i><i>o</i><i>d</i><i>e</i><i>&nbsp;</i><i>0</i><i>&nbsp;</i><i>(</i><i>0</i><i>x</i><i>0</i><i>)</i><i>.</i></div>
<div class="a" style="left:1689px;top:1155px;width:28px;height:137px;background:#e8e8ec"></div>
<svg style="left:21px;top:1274px" width="8" height="14" viewBox="0 0 8 14"><path d="M8 0V14L0 7Z" fill="#cfd0d6"/></svg>
<svg style="left:1672px;top:1274px" width="8" height="14" viewBox="0 0 8 14"><path d="M0 0V14L8 7Z" fill="#cfd0d6"/></svg>
<svg style="left:1696px;top:1164px" width="14" height="8" viewBox="0 0 14 8"><path d="M0 8H14L7 0Z" fill="#868999"/></svg>
<div class="a" style="left:1695px;top:1229px;width:16px;height:9px;background:#c2c3c9"></div>
<div class="a" style="left:1689px;top:1237px;width:28px;height:3px;background:#0a0acd"></div>
<svg style="left:1696px;top:1252px" width="14" height="8" viewBox="0 0 14 8"><path d="M0 0H14L7 8Z" fill="#868999"/></svg>
<div class="a" style="left:12px;top:1294px;width:91px;height:27px;background:#40568d"></div>
<div class="t w" style="left:20.0px;top:1296px;color:#e6eaf6;transform-origin:0 0;transform:scaleX(0.956);letter-spacing:-0.35px">Error List</div>
<div class="a" style="left:107px;top:1292px;width:78px;height:30px;background:#f7f9fe"></div>
<div class="t" style="left:116.0px;top:1295px;letter-spacing:0.20px">Output</div>
<!--STATUS-->
<div class="a" style="left:1px;top:1332.800px;width:1773px;height:36.200px;background:#40508d;border-radius:0 0 7px 7px"></div>
<svg style="left:7px;top:1339px" width="26" height="24" viewBox="0 0 26 24"><path d="M1 1H24.500V17.500H13L8 22.500V17.500H1Z" fill="#5565a0" stroke="#fff" stroke-width="1.600" stroke-linejoin="round"/></svg>
<div class="t w" style="left:43.1px;top:1339px;transform-origin:0 0;transform:scaleX(0.947);letter-spacing:-0.35px">Ready</div>
<svg style="left:1460px;top:1341px" width="22" height="21" viewBox="0 0 22 21"><path d="M1 1.500H21V5.500H1ZM3.500 5.500V20H18.500V5.500M8.500 5.500V13L11 11L13.500 13V5.500" fill="#5565a0" stroke="#fff" stroke-width="1.600"/></svg>
<div class="t w" style="left:1493.0px;top:1339px;transform-origin:0 0;transform:scaleX(0.976);letter-spacing:-0.35px">Select Repository</div>
<svg style="left:1649px;top:1347px" width="13" height="7" viewBox="0 0 13 7"><path d="M0 7H13L6.500 0Z" fill="#fff"/></svg>
<svg style="left:1693px;top:1340px" width="20" height="22" viewBox="0 0 20 22"><path d="M3.500 17V9.500C3.500 4 6 1 10 1S16.500 4 16.500 9.500V17ZM1 17H9M7 17.500L9.500 20.500" fill="#5565a0" stroke="#fff" stroke-width="1.600"/></svg>
<div class="a" style="left:1706px;top:1350px;width:17px;height:17px;border-radius:9px;background:#e81400"></div>
<svg style="left:1711px;top:1352px" width="6" height="11" viewBox="0 0 6 11"><path d="M0 2.600L3.600 0H5.200V11H3.500V2.200L0.600 4.200Z" fill="#fff"/></svg>
<svg style="left:1746px;top:1350px" width="16" height="15" viewBox="0 0 16 15"><g fill="#2f3d75"><rect x="10" y="0" width="2" height="2"/><rect x="7" y="3" width="2" height="2"/><rect x="10" y="3" width="2" height="2"/><rect x="4" y="6.5" width="2" height="2"/><rect x="7" y="6.5" width="2" height="2"/><rect x="10" y="6.5" width="2" height="2"/></g><g fill="#d8bba8"><rect x="12" y="2" width="2.200" height="2.200"/><rect x="9" y="5" width="2.200" height="2.200"/><rect x="12" y="5" width="2.200" height="2.200"/><rect x="6" y="8.5" width="2.200" height="2.200"/><rect x="9" y="8.5" width="2.200" height="2.200"/><rect x="12" y="8.5" width="2.200" height="2.200"/><rect x="3" y="11.5" width="2.200" height="2.200"/><rect x="6" y="11.5" width="2.200" height="2.200"/><rect x="9" y="11.5" width="2.200" height="2.200"/><rect x="12" y="11.5" width="2.200" height="2.200"/></g></svg>
<!--GITMENU-->
<div class="a" style="left:251px;top:44px;width:336px;height:188px;background:#e9eeff;border:1px solid #8e9bc6;box-shadow:4px 4px 5px rgba(30,40,80,0.450)"></div>
<div class="a" style="left:252px;top:40px;width:52px;height:8px;background:#e9eeff"></div>
<svg style="left:261px;top:53px" width="20" height="21" viewBox="0 0 20 21"><path d="M10 0.500V10.500M6 6.500L10 10.500L14 6.500" fill="none" stroke="#1a6fb5" stroke-width="1.600"/><rect x="1" y="14.500" width="18" height="5.500" rx="1.500" fill="#e9eeff" stroke="#1e1e1e" stroke-width="1.600"/><path d="M12.500 17.300H14M15.500 17.300H17" stroke="#1e1e1e" stroke-width="1.500"/></svg>
<div class="t" style="left:301.2px;top:51px;transform-origin:0 0;transform:scaleX(0.990);letter-spacing:-0.35px">Clone Repository...</div>
<div class="a" style="left:254px;top:80px;width:328px;height:33px;background:#aec2fb;border:1.500px solid #2a4a9c"></div>
<svg style="left:259px;top:85px" width="26" height="25" viewBox="0 0 26 25"><g stroke="#b8860b" stroke-width="1.200"><path d="M5.500 0.500V10.500M0.500 5.500H10.500M2 2L9 9M9 2L2 9"/></g><path d="M15 4.500L24.500 14L15 23.500L5.500 14Z" fill="#f0503c"/><path d="M13 10.500L17.500 15M15 12.500V19" stroke="#fff" stroke-width="1.500" fill="none"/><circle cx="15" cy="19" r="1.400" fill="#fff"/><circle cx="17.800" cy="15.200" r="1.400" fill="#fff"/><circle cx="15" cy="12.500" r="1.400" fill="#fff"/></svg>
<div class="t" style="left:301.2px;top:84px;transform-origin:0 0;transform:scaleX(0.993);letter-spacing:-0.35px">Create Git Repository...</div>
<div class="t" style="left:301.9px;top:117px;transform-origin:0 0;transform:scaleX(0.965);letter-spacing:-0.35px">Local Repositories...</div>
<svg style="left:564px;top:125px" width="7" height="11" viewBox="0 0 7 11"><path d="M0 0V10.500L6.500 5.200Z" fill="#1e1e1e"/></svg>
<div class="a" style="left:296px;top:150px;width:285px;height:1.500px;background:#b4c0e6"></div>
<div class="t" style="left:301.2px;top:158px;transform-origin:0 0;transform:scaleX(0.981);letter-spacing:-0.35px">Commit or Stash...</div>
<div class="a" style="left:296px;top:191px;width:285px;height:1.500px;background:#b4c0e6"></div>
<svg style="left:261px;top:201px" width="22" height="22" viewBox="0 0 22 22"><g stroke="#1e1e1e" stroke-width="4.200"><path d="M11 0.500V21.500M0.500 11H21.500M3.600 3.600L18.400 18.400M18.400 3.600L3.600 18.400"/></g><circle cx="11" cy="11" r="7.700" fill="#1e1e1e"/><g stroke="#e9eeff" stroke-width="1.400"><path d="M11 1.800V20.200M1.800 11H20.200M4.500 4.500L17.500 17.500M17.500 4.500L4.500 17.500"/></g><circle cx="11" cy="11" r="6.300" fill="#e9eeff"/><circle cx="11" cy="11" r="3.300" fill="none" stroke="#1e1e1e" stroke-width="1.500"/></svg>
<div class="t" style="left:302.2px;top:199px;transform-origin:0 0;transform:scaleX(0.994);letter-spacing:-0.35px">Settings</div>
</div>
</body>
</html>
